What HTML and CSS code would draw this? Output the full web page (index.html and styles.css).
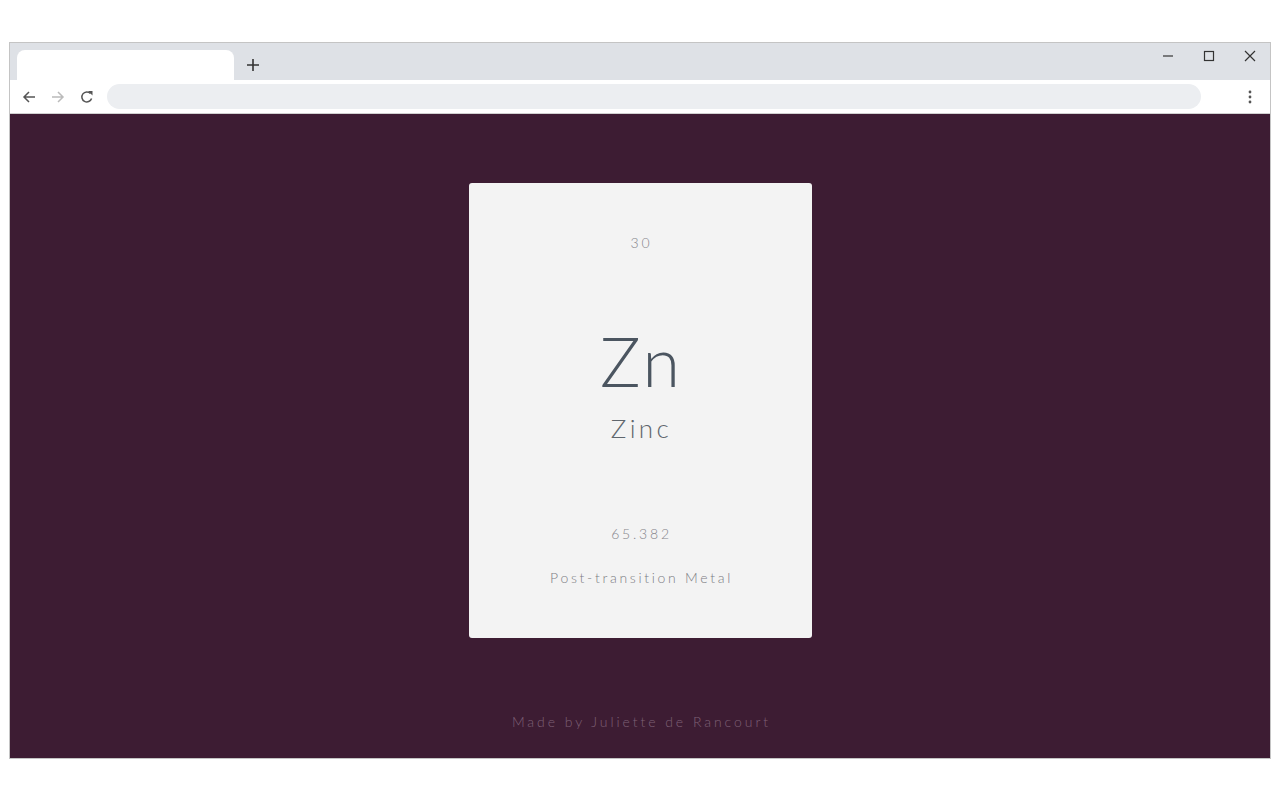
FILE: index.html
```html
<!DOCTYPE html>
<html>
<head>
<meta charset="utf-8">
<title>Zinc</title>
<link rel="stylesheet" href="styles.css">
</head>
<body>
<div class="window">
  <div class="tabstrip">
    <div class="tab"></div>
    <div class="newtab">
      <svg width="14" height="14" viewBox="0 0 14 14"><path d="M7 1v12M1 7h12" stroke="#333" stroke-width="1.6" fill="none"/></svg>
    </div>
    <div class="controls">
      <svg width="12" height="12" viewBox="0 0 12 12"><path d="M1 6h10" stroke="#333" stroke-width="1.2"/></svg>
      <svg width="12" height="12" viewBox="0 0 12 12"><rect x="1.5" y="1.5" width="9" height="9" stroke="#333" stroke-width="1.2" fill="none"/></svg>
      <svg width="12" height="12" viewBox="0 0 12 12"><path d="M1 1l10 10M11 1L1 11" stroke="#333" stroke-width="1.2"/></svg>
    </div>
  </div>
  <div class="toolbar">
    <div class="navs">
      <svg width="16" height="16" viewBox="0 0 16 16"><path d="M14 8H3M8 3L3 8l5 5" stroke="#555" stroke-width="1.5" fill="none"/></svg>
      <svg width="16" height="16" viewBox="0 0 16 16"><path d="M2 8h11M8 3l5 5-5 5" stroke="#bbb" stroke-width="1.5" fill="none"/></svg>
      <svg width="16" height="16" viewBox="0 0 16 16"><path d="M12.6 9.5A5 5 0 1 1 11.5 4.5" stroke="#555" stroke-width="1.5" fill="none"/><path d="M9 2h4.5v4.5z" fill="#555"/></svg>
    </div>
    <div class="address"></div>
    <div class="menu">
      <svg width="4" height="14" viewBox="0 0 4 14"><circle cx="2" cy="2" r="1.4" fill="#555"/><circle cx="2" cy="7" r="1.4" fill="#555"/><circle cx="2" cy="12" r="1.4" fill="#555"/></svg>
    </div>
  </div>
  <div class="content">
    <div class="card">
      <div class="number">30</div>
      <div class="symbol">Zn</div>
      <div class="name">Zinc</div>
      <div class="mass">65.382</div>
      <div class="category">Post-transition Metal</div>
    </div>
    <div class="footer">Made by Juliette de Rancourt</div>
  </div>
</div>
</body>
</html>
```

FILE: styles.css
```css
* { box-sizing: border-box; }
html, body { margin: 0; padding: 0; background: #fff; }
body { font-family: Lato, "Liberation Sans", sans-serif; }

.window {
  margin: 42px 9px 0 9px;
  height: 717px;
  border: 1px solid #c4c4c4;
  display: flex;
  flex-direction: column;
}

.tabstrip {
  height: 37px;
  background: #dee1e6;
  display: flex;
  align-items: flex-end;
  padding-left: 7px;
}
.tab {
  width: 217px;
  height: 30px;
  background: #fff;
  border-radius: 8px 8px 0 0;
}
.newtab {
  width: 40px;
  height: 30px;
  display: flex;
  align-items: center;
  justify-content: center;
  margin-left: -1px;
}
.controls {
  margin-left: auto;
  align-self: stretch;
  display: flex;
  align-items: flex-start;
  padding-top: 7px;
  padding-right: 14px;
  gap: 29px;
}

.toolbar {
  height: 34px;
  background: #fff;
  border-bottom: 1px solid #d0d0d0;
  display: flex;
  align-items: center;
}
.navs {
  display: flex;
  gap: 13px;
  padding-left: 11px;
  width: 97px;
}
.address {
  flex: 1;
  height: 25px;
  border-radius: 13px;
  background: #eceef1;
  margin-top: -1px;
}
.menu {
  width: 69px;
  display: flex;
  justify-content: center;
  padding-left: 28px;
}

.content {
  flex: 1;
  background: #3d1c33;
  display: flex;
  flex-direction: column;
  align-items: center;
  padding-top: 69px;
}

.card {
  width: 343px;
  height: 455px;
  background: #f3f3f3;
  border-radius: 3px;
  display: flex;
  flex-direction: column;
  align-items: center;
  padding-top: 50px;
  text-align: center;
}
.number, .mass {
  font-size: 14px;
  line-height: 20px;
  font-weight: 300;
  letter-spacing: 2.8px;
  color: #86868c;
  padding-left: 3px;
}
.symbol {
  font-size: 68px;
  line-height: 68px;
  font-weight: 300;
  color: #4b5560;
  margin-top: 74px;
  letter-spacing: 3px;
  padding-left: 3px;
}
.name {
  font-size: 26px;
  line-height: 26px;
  font-weight: 300;
  color: #5f666d;
  margin-top: 20px;
  letter-spacing: 3.4px;
  padding-left: 3px;
}
.mass { margin-top: 83px; }
.category {
  font-size: 14px;
  line-height: 20px;
  font-weight: 300;
  letter-spacing: 2.7px;
  color: #7c7c83;
  margin-top: 24px;
  padding-left: 3px;
}
.footer {
  margin-top: 74px;
  font-size: 14px;
  line-height: 20px;
  font-weight: 300;
  letter-spacing: 2.95px;
  color: #7d6075;
  padding-left: 3px;
}
```
